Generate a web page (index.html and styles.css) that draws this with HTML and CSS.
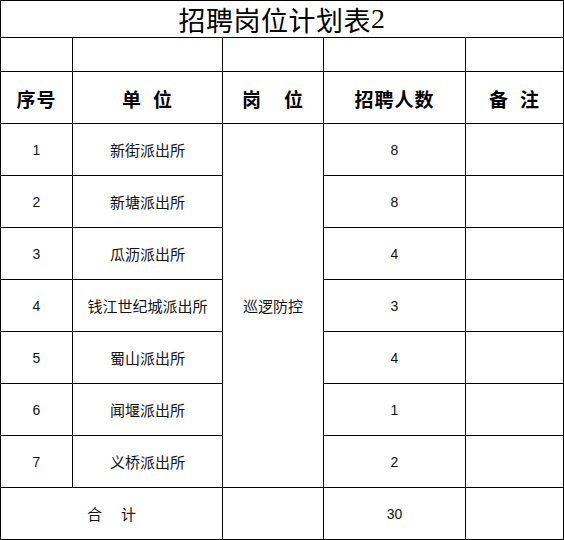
FILE: index.html
```html
<!DOCTYPE html>
<html lang="zh">
<head>
<meta charset="utf-8">
<title>招聘岗位计划表2</title>
<link rel="stylesheet" href="styles.css">
</head>
<body>
<div class="sheet">
  <div class="cell title span5">招聘岗位计划表<span class="num">2</span></div>

  <div class="cell"></div>
  <div class="cell"></div>
  <div class="cell"></div>
  <div class="cell"></div>
  <div class="cell"></div>

  <div class="cell head">序号</div>
  <div class="cell head"><span>单</span><span class="gap"></span><span>位</span></div>
  <div class="cell head"><span>岗</span><span class="gap wide"></span><span>位</span></div>
  <div class="cell head">招聘人数</div>
  <div class="cell head"><span>备</span><span class="gap"></span><span>注</span></div>

  <div class="cell num-cell">1</div>
  <div class="cell text">新街派出所</div>
  <div class="cell text post">巡逻防控</div>
  <div class="cell num-cell">8</div>
  <div class="cell"></div>

  <div class="cell num-cell">2</div>
  <div class="cell text">新塘派出所</div>
  <div class="cell num-cell">8</div>
  <div class="cell"></div>

  <div class="cell num-cell">3</div>
  <div class="cell text">瓜沥派出所</div>
  <div class="cell num-cell">4</div>
  <div class="cell"></div>

  <div class="cell num-cell">4</div>
  <div class="cell text">钱江世纪城派出所</div>
  <div class="cell num-cell">3</div>
  <div class="cell"></div>

  <div class="cell num-cell">5</div>
  <div class="cell text">蜀山派出所</div>
  <div class="cell num-cell">4</div>
  <div class="cell"></div>

  <div class="cell num-cell">6</div>
  <div class="cell text">闻堰派出所</div>
  <div class="cell num-cell">1</div>
  <div class="cell"></div>

  <div class="cell num-cell">7</div>
  <div class="cell text">义桥派出所</div>
  <div class="cell num-cell">2</div>
  <div class="cell"></div>

  <div class="cell text span2"><span>合</span><span class="gap total"></span><span>计</span></div>
  <div class="cell"></div>
  <div class="cell num-cell">30</div>
  <div class="cell"></div>
</div>
</body>
</html>
```

FILE: styles.css
```css
html, body {
  margin: 0;
  padding: 0;
  background: #ffffff;
}

.sheet {
  display: grid;
  grid-template-columns: 72px 150px 101px 142px 98px;
  grid-template-rows: 37px 34px repeat(9, 52px);
  width: 564px;
  box-sizing: border-box;
  border-top: 1px solid #000;
  border-left: 1px solid #000;
  color: #000;
  font-family: "Noto Sans CJK SC", sans-serif;
}

.cell {
  box-sizing: border-box;
  border-right: 1px solid #000;
  border-bottom: 1px solid #000;
  display: flex;
  align-items: center;
  justify-content: center;
  white-space: nowrap;
  line-height: 1;
}

.span5 { grid-column: 1 / span 5; }
.span2 { grid-column: 1 / span 2; }

.post {
  grid-column: 3;
  grid-row: 4 / span 7;
}

.title {
  font-family: "Noto Sans CJK SC", sans-serif;
  font-size: 27px;
  font-weight: 400;
  letter-spacing: 0.5px;
}

.title .num {
  font-family: "Liberation Serif", serif;
  font-size: 28px;
}

.head {
  font-size: 19px;
  font-weight: 700;
  letter-spacing: 1px;
  padding-top: 1px;
}

.gap { display: inline-block; width: 11px; }
.gap.wide { width: 22px; }
.gap.total { width: 19px; }

.text {
  font-size: 15px;
  font-weight: 400;
  color: #111;
}

.num-cell {
  font-family: "Liberation Sans", Arial, sans-serif;
  font-size: 14px;
  color: #111;
}
```
